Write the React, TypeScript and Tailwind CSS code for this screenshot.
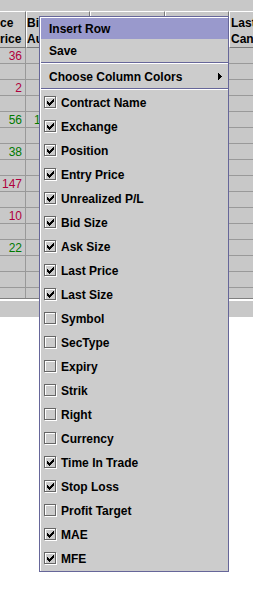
import React from 'react';

const RED = 'text-[#b0003c]';
const GREEN = 'text-[#007a00]';

type Row = { a?: string; ac?: string; b?: string; bc?: string };

const rows: Row[] = [
  { a: '36', ac: RED },
  {},
  { a: '2', ac: RED },
  {},
  { a: '56', ac: GREEN, b: '1', bc: GREEN },
  {},
  { a: '38', ac: GREEN },
  {},
  { a: '147', ac: RED },
  {},
  { a: '10', ac: RED },
  {},
  { a: '22', ac: GREEN },
  {},
  {},
  {},
];

const columns = [
  { label: 'Contract Name', checked: true },
  { label: 'Exchange', checked: true },
  { label: 'Position', checked: true },
  { label: 'Entry Price', checked: true },
  { label: 'Unrealized P/L', checked: true },
  { label: 'Bid Size', checked: true },
  { label: 'Ask Size', checked: true },
  { label: 'Last Price', checked: true },
  { label: 'Last Size', checked: true },
  { label: 'Symbol', checked: false },
  { label: 'SecType', checked: false },
  { label: 'Expiry', checked: false },
  { label: 'Strik', checked: false },
  { label: 'Right', checked: false },
  { label: 'Currency', checked: false },
  { label: 'Time In Trade', checked: true },
  { label: 'Stop Loss', checked: true },
  { label: 'Profit Target', checked: false },
  { label: 'MAE', checked: true },
  { label: 'MFE', checked: true },
];

// metal style check box, 13x13, drawn pixel by pixel
function CheckIcon({ checked }: { checked: boolean }) {
  const check = [
    [9, 3, 1], [8, 4, 2], [7, 5, 3], [6, 6, 3], [3, 7, 5], [4, 8, 3], [5, 9, 1], [3, 5, 1], [3, 6, 2],
  ];
  return (
    <svg width="13" height="13" viewBox="0 0 13 13" shapeRendering="crispEdges" className="shrink-0">
      <rect x="0" y="0" width="12" height="1" fill="#666666" />
      <rect x="0" y="0" width="1" height="12" fill="#666666" />
      <rect x="0" y="11" width="12" height="1" fill="#666666" />
      <rect x="11" y="0" width="1" height="12" fill="#666666" />
      <rect x="1" y="1" width="10" height="1" fill="#ffffff" />
      <rect x="1" y="1" width="1" height="10" fill="#ffffff" />
      <rect x="1" y="12" width="12" height="1" fill="#ffffff" />
      <rect x="12" y="1" width="1" height="12" fill="#ffffff" />
      {checked &&
        check.map(([x, y, w], i) => <rect key={i} x={x} y={y} width={w} height="1" fill="#000000" />)}
    </svg>
  );
}

function HeaderCell({ w, top, bottom, className = '' }: { w: string; top?: string; bottom?: string; className?: string }) {
  return (
    <div
      className={`${w} h-[37px] shrink-0 overflow-hidden whitespace-nowrap border-t border-l border-t-white border-l-white border-r border-b border-r-[#7a7a7a] border-b-[#7a7a7a] pt-[3px] font-bold leading-[16px] ${className}`}
    >
      <div>{top}</div>
      <div>{bottom}</div>
    </div>
  );
}

export default function App() {
  return (
    <div className="relative w-[253px] h-[592px] overflow-hidden bg-white font-['Liberation_Sans',Arial,sans-serif] text-[12px] text-black">
      {/* table */}
      <div className="h-[11px] bg-[#c8c8c8]" />
      <div className="flex bg-[#c8c8c8]">
        <HeaderCell w="w-[26px]" top="ce" bottom="rice" className="!border-l-0" />
        <HeaderCell w="w-[64px]" top="Bi" bottom="Au" />
        <HeaderCell w="w-[75px]" />
        <HeaderCell w="w-[64px]" />
        <HeaderCell w="w-[40px]" top="Last" bottom="Can" className="pl-[1px]" />
      </div>
      <div className="h-[250px] overflow-hidden bg-[#c8c8c8]">
        {rows.map((r, i) => (
          <div key={i} className="flex h-[16px] border-b border-[#999999] leading-[16px]">
            <div className={`w-[26px] shrink-0 border-r border-[#999999] pr-[3px] text-right ${r.ac ?? ''}`}>{r.a}</div>
            <div className={`w-[64px] shrink-0 border-r border-[#999999] pl-[8px] ${r.bc ?? ''}`}>{r.b}</div>
            <div className="w-[75px] shrink-0 border-r border-[#999999]" />
            <div className="w-[64px] shrink-0 border-r border-[#999999]" />
            <div className="flex-1" />
          </div>
        ))}
      </div>
      <div className="h-[1px] bg-[#808080]" />
      <div className="h-[2px] bg-white" />
      <div className="h-[16px] bg-[#c8c8c8]" />

      {/* popup menu */}
      <div className="absolute left-[39px] top-[16px] w-[190px] h-[556px] border border-[#666699] bg-[#cccccc] font-bold">
        <div className="border-t border-l border-white h-full flex flex-col">
          <div className="h-[21px] flex items-center pl-[8px] pt-[1px] bg-[#9999cc]">Insert Row</div>
          <div className="h-[23px] flex items-center pl-[8px] pt-[1px]">Save</div>
          <div className="h-[1px] bg-[#666699]" />
          <div className="h-[1px] bg-white" />
          <div className="h-[24px] flex items-center pl-[8px] pr-[6px] pt-[1px]">
            <span className="flex-1">Choose Column Colors</span>
            <svg width="4" height="7" viewBox="0 0 4 7" shapeRendering="crispEdges">
              <polygon points="0,0 4,3.5 0,7" fill="#000000" />
            </svg>
          </div>
          <div className="h-[1px] bg-[#666699]" />
          <div className="h-[1px] bg-white" />
          {columns.map((c) => (
            <div key={c.label} className="h-[24px] shrink-0 flex items-center gap-[4px] pl-[3px]">
              <CheckIcon checked={c.checked} />
              <span className="pt-[1px]">{c.label}</span>
            </div>
          ))}
        </div>
      </div>
    </div>
  );
}
